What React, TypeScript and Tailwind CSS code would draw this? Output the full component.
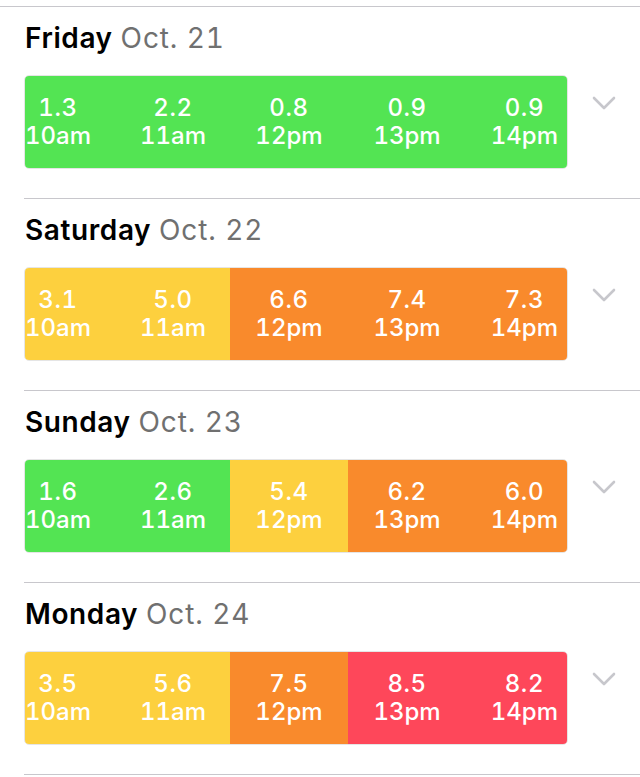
import React from "react";

type Cell = { v: string; t: string };
type Day = { name: string; date: string; colors: string[]; cells: Cell[] };

const C: Record<string, string> = {
  g: "bg-[#53e453]",
  y: "bg-[#fdd03e]",
  o: "bg-[#f98a2c]",
  r: "bg-[#fe475a]",
};

const times = ["10am", "11am", "12pm", "13pm", "14pm"];

const days: Day[] = [
  { name: "Friday", date: "Oct. 21", colors: ["g", "g", "g", "g", "g"], cells: ["1.3", "2.2", "0.8", "0.9", "0.9"].map((v, i) => ({ v, t: times[i] })) },
  { name: "Saturday", date: "Oct. 22", colors: ["y", "y", "o", "o", "o"], cells: ["3.1", "5.0", "6.6", "7.4", "7.3"].map((v, i) => ({ v, t: times[i] })) },
  { name: "Sunday", date: "Oct. 23", colors: ["g", "g", "y", "o", "o"], cells: ["1.6", "2.6", "5.4", "6.2", "6.0"].map((v, i) => ({ v, t: times[i] })) },
  { name: "Monday", date: "Oct. 24", colors: ["y", "y", "o", "r", "r"], cells: ["3.5", "5.6", "7.5", "8.5", "8.2"].map((v, i) => ({ v, t: times[i] })) },
];

const widths = ["w-[91px]", "w-[115px]", "w-[118px]", "w-[119px]", "w-[101px]"];
const aligns = ["justify-start", "justify-center", "justify-center", "justify-center", "justify-end pr-[9px]"];

function Chevron() {
  return (
    <svg width="24" height="14" viewBox="0 0 24 14" className="block">
      <polyline points="2,2 12,12 22,2" fill="none" stroke="#c7c7cc" strokeWidth="2.6" strokeLinecap="round" strokeLinejoin="round" />
    </svg>
  );
}

export default function App() {
  return (
    <div className="w-[640px] h-[777px] bg-white overflow-hidden" style={{ fontFamily: "Inter, 'Noto Sans', sans-serif" }}>
      <div className="h-[6px]" />
      <div className="h-px bg-[#c8c7cc]" />
      {days.map((d) => (
        <div key={d.name}>
          <div className="pt-[14px] pl-[25px] text-[28px] leading-[34px]">
            <span className="font-semibold text-black tracking-[0.6px]">{d.name}</span>{" "}
            <span className="text-[#707070] tracking-[0.9px] tabular-nums">{d.date}</span>
          </div>
          <div className="flex items-start mt-[20px]">
            <div className="ml-[24px] w-[544px] h-[94px] rounded-[5px] overflow-hidden flex border border-black/10">
              {d.cells.map((c, i) => (
                <div key={i} className={`${widths[i]} ${aligns[i]} ${C[d.colors[i]]} flex items-center h-full`}>
                  <div className="flex flex-col items-center text-white text-[24px] leading-[28px] font-medium tabular-nums tracking-[0px]">
                    <span className="tracking-[0.6px]">{c.v}</span>
                    <span>{c.t}</span>
                  </div>
                </div>
              ))}
            </div>
            <div className="ml-[24px] mt-[21px]">
              <Chevron />
            </div>
          </div>
          <div className="mt-[29px] ml-[24px] h-px bg-[#c8c7cc]" />
        </div>
      ))}
    </div>
  );
}
